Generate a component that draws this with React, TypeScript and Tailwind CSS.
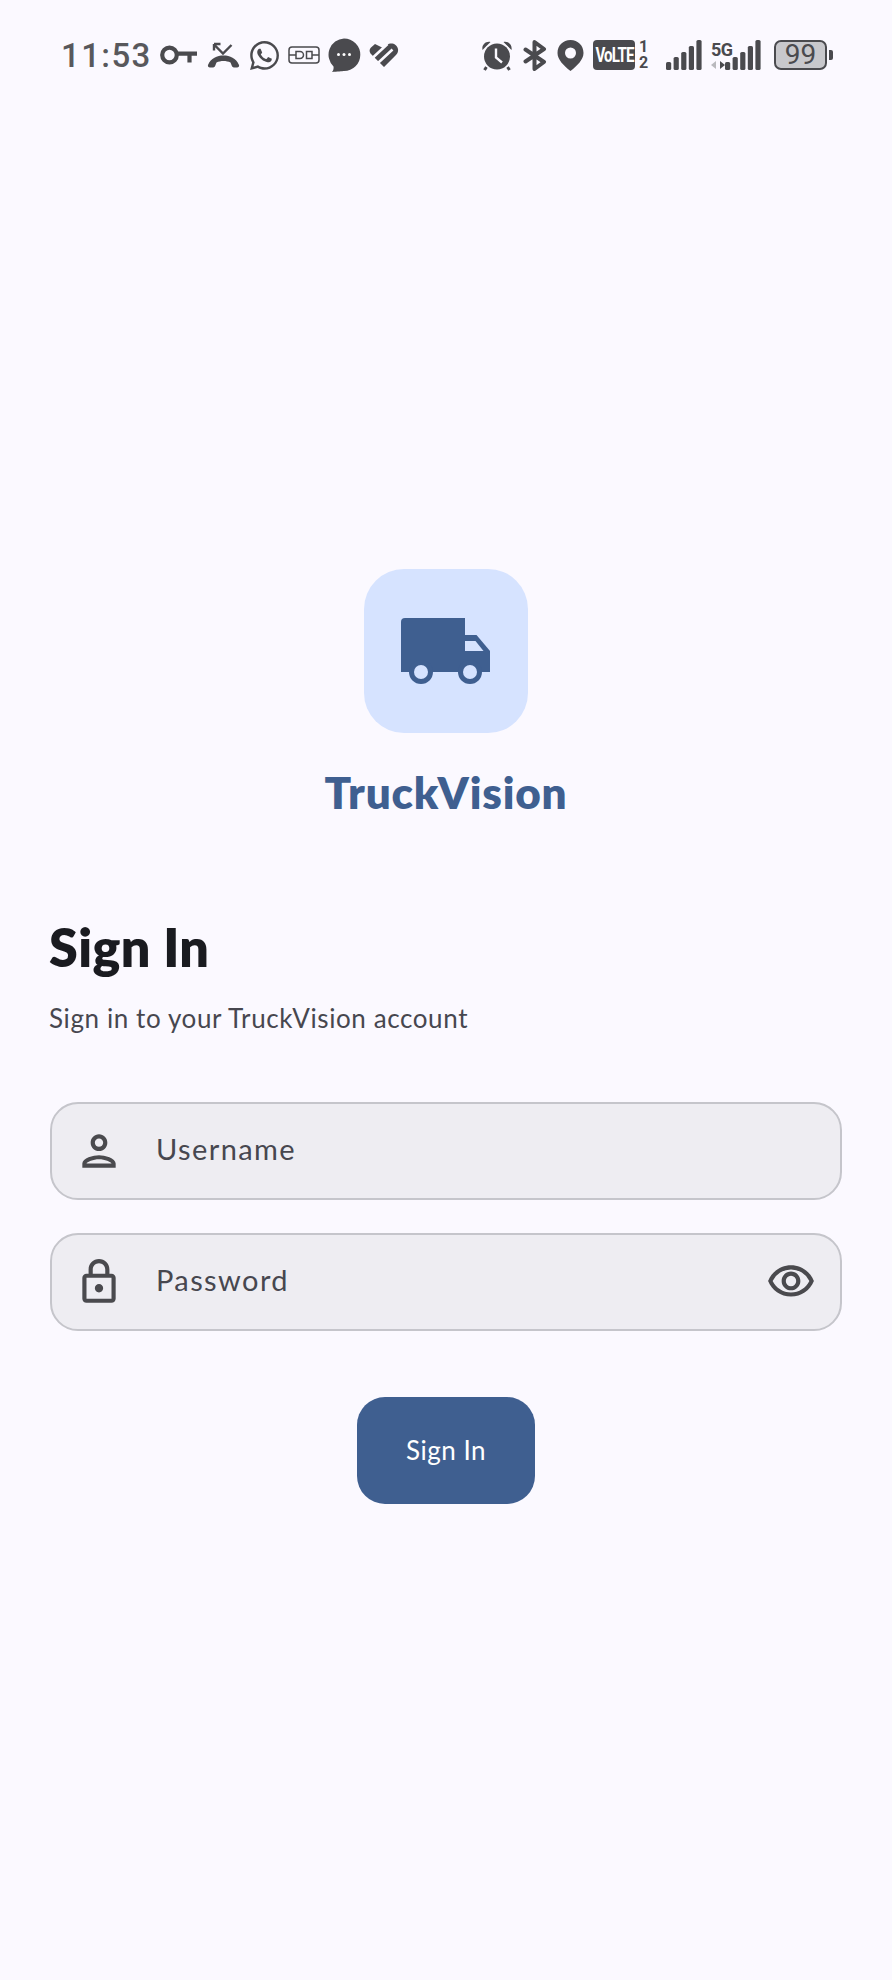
import { FaWhatsapp } from "react-icons/fa";
import { MdOutlineLock, MdOutlinePerson, MdOutlineVisibility } from "react-icons/md";

const ICON = "#4a4a4e";
const BG = "#fbf9ff";

function SignalBars({ heights, className }: { heights: number[]; className: string }) {
  return (
    <svg className={className} viewBox="0 0 36 30">
      {heights.map((h, i) => (
        <rect key={i} x={i * 7.6} y={30 - h} width="5.2" height={h} rx="1.6" fill={ICON} />
      ))}
    </svg>
  );
}

function StatusBar() {
  return (
    <div className="flex h-[110px] items-center pl-[61px] text-[#4a4a4e]">
      <span className="w-[92px] font-['Roboto',sans-serif] text-[33px] font-medium leading-none tracking-[1.4px] text-[#58585c]">11:53</span>
      {/* key */}
      <svg className="ml-[7px] h-[20px] w-[38px]" viewBox="0 0 38 20" fill="none" stroke={ICON} strokeWidth="4.2">
        <circle cx="9.5" cy="10" r="7.3" />
        <path d="M17 8.6h20M29.5 8.6v9" />
      </svg>
      {/* missed call */}
      <svg className="ml-[9px] h-[26px] w-[33px]" viewBox="0 0 33 26" fill="none">
        <path d="M7 2.5l9 9 8.5-8.500M7 2v6.500M7 2h6.500" stroke={ICON} strokeWidth="2.4" />
        <path d="M1 23c3-7 9-9.500 15.500-9.500S29 16 32 23c.5 1.500-.5 2.500-2 2.500h-3c-1.500 0-2-1-2.500-2.500l-1-2.500c-2-1-4.500-1.500-7-1.500s-5 .5-7 1.500l-1 2.500c-.5 1.500-1 2.500-2.500 2.500H3c-1.500 0-2.500-1-2-2.500z" fill={ICON} />
      </svg>
      <FaWhatsapp className="ml-[8px] text-[#4a4a4e]" size={33} />
      {/* connector */}
      <svg className="ml-[7px] h-[18px] w-[32px]" viewBox="0 0 32 18" fill="none" stroke={ICON} strokeWidth="1.5">
        <rect x="1" y="1" width="30" height="16" rx="3" />
        <path d="M1 9h7M24 9h7M8 5.500h4a3.500 3.500 0 0 1 0 7H8zM24 5.500h-5.500v7H24z" />
      </svg>
      {/* chat */}
      <svg className="ml-[7px] h-[34px] w-[34px]" viewBox="0 0 34 34">
        <path d="M17 .5a16.300 16.300 0 0 1 0 32.600c-1.500 0-7 .9-12 .9 1.500-1.800 1.800-3.800 1.500-5.500A16.300 16.300 0 0 1 17 .5z" fill={ICON} />
        <circle cx="11.500" cy="16.500" r="1.500" fill="#fff" />
        <circle cx="17" cy="16.500" r="1.500" fill="#fff" />
        <circle cx="22.500" cy="16.500" r="1.500" fill="#fff" />
      </svg>
      {/* health heart */}
      <svg className="ml-[8px] h-[24px] w-[30px]" viewBox="0 0 30 24">
        <path d="M14 5l4-3c4-3 10-1 11 4 .5 3-1 5-3 7L15 24 1.500 10.500C0 8.500.5 6 2 4.500L6 1z" fill={ICON} />
        <path d="M4 14.500L18.500 1M9.500 19.500L23.500 6.500" stroke={BG} strokeWidth="2.6" fill="none" />
      </svg>

      {/* alarm */}
      <svg className="ml-[82px] h-[31px] w-[32px]" viewBox="0 0 32 31">
        <path d="M1.500 10C.5 5 4.500 1 9.500 2zM30.500 10c1-5-3-9-8-8z" fill={ICON} />
        <path d="M5.500 27l-2 3M26.500 27l2 3" stroke={ICON} strokeWidth="3" fill="none" />
        <circle cx="16" cy="16.500" r="14.500" fill={BG} />
        <circle cx="16" cy="16.500" r="13" fill={ICON} />
        <path d="M15 8.500v9l6 5" fill="none" stroke={BG} strokeWidth="2.4" />
      </svg>
      {/* bluetooth */}
      <svg className="ml-[10px] h-[31px] w-[24px]" viewBox="0 0 24 31" fill="none" stroke={ICON} strokeWidth="4" strokeLinejoin="round" strokeLinecap="round">
        <path d="M2.500 9.500L21 22l-9.500 7V2L21 9 2.500 21.500" />
      </svg>
      {/* pin */}
      <svg className="ml-[10px] h-[31px] w-[27px]" viewBox="0 0 27 31">
        <path fillRule="evenodd" d="M13.500 0C6 0 .5 5.500 .5 13c0 6.500 6 12.500 13 18 7-5.500 13-11.500 13-18C26.500 5.500 21 0 13.500 0zm0 7.500a5.500 5.500 0 1 1 0 11 5.500 5.500 0 0 1 0-11z" fill={ICON} />
      </svg>
      {/* volte */}
      <div className="ml-[9px] flex h-[30px] w-[42px] items-center justify-center rounded-[4px] bg-[#4a4a4e] font-['Roboto',sans-serif] text-[21px] font-bold leading-none tracking-[-1.2px] text-white">
        <span className="scale-x-[0.72]">VoLTE</span>
      </div>
      <div className="ml-[4px] flex w-[9px] flex-col items-center font-['Roboto',sans-serif] text-[16px] font-bold leading-[16px]">
        <span>1</span>
        <span>2</span>
      </div>
      <SignalBars className="ml-[18px] h-[30px] w-[36px]" heights={[8, 13, 18, 24, 30]} />
      {/* 5G */}
      <div className="relative ml-[9px] h-[30px] w-[50px]">
        <span className="absolute left-0 top-[1px] font-['Roboto',sans-serif] text-[18px] font-bold leading-none tracking-[-0.5px]">5G</span>
        <svg className="absolute left-0 bottom-0 h-[10px] w-[14px]" viewBox="0 0 14 10">
          <path d="M5 1v8L0 5z" fill="#b9b9bd" />
          <path d="M9 1v8l5-4z" fill={ICON} />
        </svg>
        <SignalBars className="absolute right-0 top-0 h-[30px] w-[36px]" heights={[8, 13, 18, 24, 30]} />
      </div>
      {/* battery */}
      <div className="ml-[13px] flex h-[30px] w-[53px] items-center justify-center rounded-[7px] border-[2.5px] border-[#4a4a4e] bg-[#c8c8cc] font-['Roboto',sans-serif] text-[28px] leading-none">
        99
      </div>
      <div className="ml-[2px] h-[10px] w-[4px] rounded-r-[2px] bg-[#4a4a4e]" />
    </div>
  );
}

function Field({ label, icon, trailing }: { label: string; icon: React.ReactNode; trailing?: React.ReactNode }) {
  return (
    <div className="flex h-[98px] items-center rounded-[28px] border-2 border-[#c5c5cb] bg-[#eeedf2] pl-[22px] pr-[24px]">
      {icon}
      <span className="ml-[32px] -mt-[5px] flex-1 text-[29px] leading-none tracking-[1.4px] text-[#47474f]">{label}</span>
      {trailing}
    </div>
  );
}

export default function App() {
  return (
    <div className="h-[1980px] w-[892px] bg-[#fbf9ff] font-['Lato',sans-serif]">
      <StatusBar />

      <div className="mt-[459px] flex flex-col items-center">
        <div className="flex h-[164px] w-[164px] items-center justify-center rounded-[40px] bg-[#d6e3ff]">
          <svg className="h-[72px] w-[96px]" viewBox="0 0 96 72">
            <path d="M7 3h60v54H3V7a4 4 0 0 1 4-4z" fill="#3f5f90" />
            <path d="M65 20h13.500l13.500 16v21H65z" fill="#3f5f90" />
            <path d="M67 26h10.500l8 10H67z" fill="#d6e3ff" />
            <circle cx="23" cy="57" r="12" fill="#3f5f90" />
            <circle cx="23" cy="57" r="7" fill="#d6e3ff" />
            <circle cx="72" cy="57" r="12" fill="#3f5f90" />
            <circle cx="72" cy="57" r="7" fill="#d6e3ff" />
          </svg>
        </div>
        <h1 className="mt-[33px] text-[44px] font-extrabold leading-[1.2] tracking-[0.8px] text-[#3f5f90]">TruckVision</h1>
      </div>

      <div className="mt-[97px] px-[50px]">
        <h2 className="-ml-[1px] text-[52px] font-extrabold leading-[1.2] tracking-[0.4px] text-[#1a1b20]">Sign In</h2>
        <p className="-ml-[1px] mt-[25px] text-[26px] leading-[1.2] tracking-[0.6px] text-[#47474f]">Sign in to your TruckVision account</p>

        <div className="mt-[68px] flex flex-col gap-[33px]">
          <Field label="Username" icon={<MdOutlinePerson size={50} color={ICON} />} />
          <Field
            label="Password"
            icon={<MdOutlineLock size={50} color={ICON} />}
            trailing={<MdOutlineVisibility size={50} color={ICON} />}
          />
        </div>

        <div className="mt-[66px] flex justify-center">
          <button className="flex h-[107px] w-[178px] items-center justify-center rounded-[28px] bg-[#3f5f90] text-[26px] tracking-[0.5px] text-white">
            Sign In
          </button>
        </div>
      </div>
    </div>
  );
}
